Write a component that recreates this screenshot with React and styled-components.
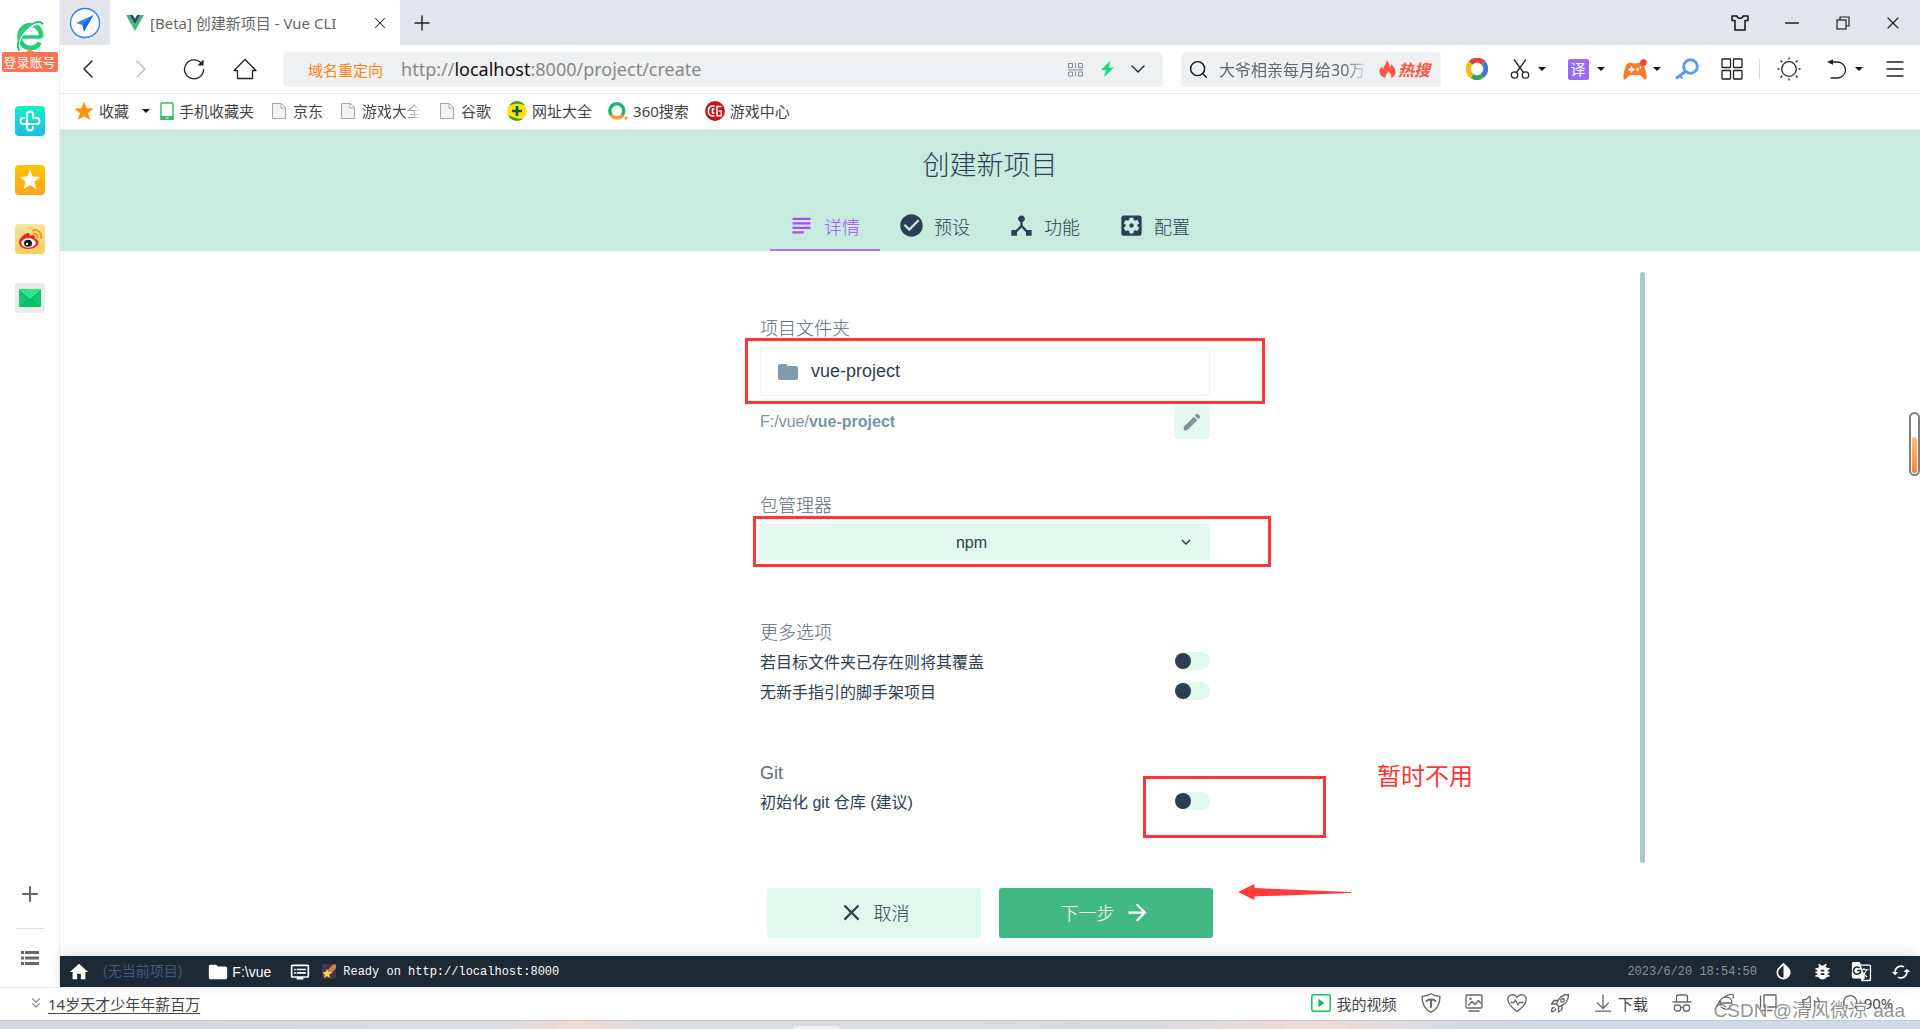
import { useState } from 'react';
import styled, { createGlobalStyle, css } from 'styled-components';
import { ChevronDown, ChevronLeft, ChevronRight, ChevronsDown, Menu, Minus, Plus, Search, Volume2, X } from 'lucide-react';
import {
  MdArrowForward,
  MdBugReport,
  MdCached,
  MdCheckCircle,
  MdClose,
  MdDeviceHub,
  MdDvr,
  MdEdit,
  MdFolder,
  MdGTranslate,
  MdHome,
  MdInvertColors,
  MdKeyboardArrowDown,
  MdSettingsApplications,
  MdSubject,
} from 'react-icons/md';

const uiFont = '"Noto Sans", "Noto Sans CJK SC", sans-serif';
const pageFont = '"Liberation Sans", "Noto Sans CJK SC", sans-serif';
const monoFont = '"Liberation Mono", monospace';

const GlobalStyle = createGlobalStyle`
  *, *::before, *::after {
    box-sizing: border-box;
  }

  body {
    margin: 0;
    background: #fff;
    font-family: ${uiFont};
    font-size: 15px;
    color: #444;
  }

  button {
    border: 0;
    padding: 0;
    background: none;
    color: inherit;
    font: inherit;
    cursor: pointer;
  }

  a {
    color: inherit;
    text-decoration: none;
  }

  svg {
    display: block;
    flex: none;
  }
`;

/* ---------- icons ---------- */

const LogoIcon = () => (
  <svg width="30" height="32" viewBox="0 0 30 32" fill="none">
    <path d="M6 17h20.500" stroke="#1fd072" strokeWidth="3.4" />
    <path d="M26.300 17.500C26.500 9 21.500 5 15.500 5 9 5 4.500 10 4.500 16.500S9 28 15.500 28c4.500 0 7.500-2 9-5.500" stroke="#1fd072" strokeWidth="4.600" />
    <path d="M4 31C1.500 25 4 15 12.500 8.500S26.500 1 28 4" stroke="#fff" strokeWidth="3" />
    <path d="M4.500 31C1 26 3 16 11.500 8.500S25.500 0 28 4.500" stroke="#12c467" strokeWidth="1.700" />
  </svg>
);

const CloverIcon = () => (
  <svg width="30" height="30" viewBox="0 0 30 30">
    <defs>
      <linearGradient id="clover" x2="0" y2="1">
        <stop stopColor="#14f0c4" />
        <stop offset="1" stopColor="#1bbce8" />
      </linearGradient>
    </defs>
    <rect width="30" height="30" rx="4" fill="url(#clover)" />
    <path
      d="M18 12V8.500a3 3 0 0 0-6 0v13a3 3 0 0 0 6 0V21M18 12h3.500a3 3 0 0 1 0 6h-13a3 3 0 0 1 0-6h.5"
      fill="none"
      stroke="#fff"
      strokeWidth="1.900"
      strokeLinecap="round"
    />
  </svg>
);

const StarTileIcon = () => (
  <svg width="30" height="30" viewBox="0 0 30 30">
    <defs>
      <linearGradient id="starTile" x2="0" y2="1">
        <stop stopColor="#ffc400" />
        <stop offset="1" stopColor="#ffa51e" />
      </linearGradient>
    </defs>
    <rect width="30" height="30" rx="4" fill="url(#starTile)" />
    <path d="M15 4.500l2.700 7.100 7.600.4-5.900 4.800 2 7.400-6.400-4.200-6.400 4.200 2-7.400L4.700 12l7.600-.4z" fill="#fff" />
  </svg>
);

const WeiboIcon = () => (
  <svg width="30" height="30" viewBox="0 0 30 30">
    <defs>
      <linearGradient id="weibo" x2="0" y2="1">
        <stop stopColor="#fbe3a0" />
        <stop offset="1" stopColor="#fdcb62" />
      </linearGradient>
    </defs>
    <rect width="30" height="30" rx="4" fill="url(#weibo)" />
    <path d="M4 18.500c0-4 5.500-9 9-9.500 2 0 2 2 1.500 3 2-.9 5-1.200 5.500.5.300.8 0 1.500-.3 2C22 15 23.500 16.500 23.500 18.500 23.500 22 19 25 13.500 25S4 22.500 4 18.500z" fill="#e32a1d" />
    <ellipse cx="13.500" cy="19" rx="7.300" ry="4.700" fill="#fff" />
    <ellipse cx="13" cy="19.300" rx="4" ry="3.500" fill="#161616" />
    <circle cx="12" cy="20" r="1.300" fill="#fff" />
    <path d="M18 6.500c4-1.500 9 1.500 8 7.500M18.500 10c2.500-.6 4.500.8 4 3.700" fill="none" stroke="#f19a1f" strokeWidth="2" strokeLinecap="round" />
  </svg>
);

const MailIcon = () => (
  <svg width="30" height="30" viewBox="0 0 30 30">
    <rect width="30" height="30" rx="4" fill="#ebebeb" />
    <rect x="4" y="6" width="22" height="18" rx="1" fill="#14c870" />
    <path d="M4 24l9-8h4l9 8z" fill="#0fbd66" />
    <path d="M4 7a1 1 0 0 1 1-1h20a1 1 0 0 1 1 1l-11 10z" fill="#2fe48a" />
    <path d="M4.500 8L15 17 25.500 8" fill="none" stroke="#089a50" strokeWidth=".9" />
  </svg>
);

const ListIcon = () => (
  <svg width="18" height="14" viewBox="0 0 18 14" fill="#666">
    <path d="M0 0h3v3H0zM4 0h14v3H4zM0 5.500h3v3H0zM4 5.500h14v3H4zM0 11h3v3H0zM4 11h14v3H4z" />
  </svg>
);

const PlaneIcon = () => (
  <svg width="32" height="32" viewBox="0 0 32 32">
    <circle cx="16" cy="16" r="14.500" fill="#fff" stroke="#2b7ff0" strokeWidth="1.300" />
    <path d="M24.500 8L7 16l6.500 2L15 24.500l2.500-5z" fill="#2f86f6" />
    <path d="M24.500 8l-11 10 1.500 6.500z" fill="#1668e0" />
  </svg>
);

const VueIcon = () => (
  <svg width="18" height="16" viewBox="0 0 18 16">
    <path d="M0 0h3.600L9 9.300 14.400 0H18L9 16z" fill="#41b883" />
    <path d="M3.600 0h3.300L9 3.700 11.100 0h3.300L9 9.300z" fill="#35495e" />
  </svg>
);

const ShirtIcon = () => (
  <svg width="18" height="16" viewBox="0 0 18 16" fill="none" stroke="#111" strokeWidth="1.500" strokeLinejoin="round">
    <path d="M1 1h5c.3 3 5.700 3 6 0h5v4.500h-3V15H4V5.500H1z" />
  </svg>
);

const RestoreIcon = () => (
  <svg width="14" height="14" viewBox="0 0 14 14" fill="none" stroke="#222" strokeWidth="1.200">
    <rect x="1" y="4" width="9" height="9" />
    <path d="M4 4V1h9v9h-3" />
  </svg>
);

const ReloadIcon = () => (
  <svg width="22" height="22" viewBox="0 0 22 22" fill="none">
    <path d="M18.500 5.500a9.500 9.500 0 1 0 2 5.500" stroke="#222" strokeWidth="1.300" />
    <path d="M20.500 1.500v6h-6z" fill="#222" />
  </svg>
);

const HouseIcon = () => (
  <svg width="24" height="22" viewBox="0 0 24 22" fill="none" stroke="#222" strokeWidth="1.300" strokeLinejoin="round">
    <path d="M1 12.500h3.500V20.500h15v-8H23L12 1.500z" />
  </svg>
);

const QrIcon = () => (
  <svg width="15" height="15" viewBox="0 0 15 15" fill="none" stroke="#888">
    <path d="M.5 1.500h4v4h-4zM10.500 1.500h4v4h-4zM.5 10h4v4h-4zM10.500 10h4v4h-4zM7.500 1v5M7.500 9.500v5M0 7.800h15" />
  </svg>
);

const BoltIcon = () => (
  <svg width="13" height="16" viewBox="0 0 13 16">
    <path d="M9 0L0 9h5l-2 7 10-9.500H8z" fill="#16db70" />
  </svg>
);

const FireIcon = () => (
  <svg width="17" height="18" viewBox="0 0 17 18">
    <path d="M7.500 0c2.500 2.500 3.500 5 2.800 7.500 1.200-.4 1.700-1.800 1.600-3.500C15 6.500 16.500 9 16.500 12c0 3-2 5.200-4.500 6 1-2.700-.2-5-3.300-6.700.2 2.500-2.900 3.700-2.200 6.700C3 17.200.500 14.800.500 11.500.500 9.200 1.800 7.500 3 6.500c.1 1.300.5 2 1.300 2.500C4.500 5.500 7.800 4 7.500 0z" fill="#ff5545" />
  </svg>
);

const ColorRingIcon = () => (
  <svg width="22" height="22" viewBox="0 0 22 22" fill="none" strokeWidth="5">
    <path d="M4.600 5A8.500 8.500 0 0 1 17.400 5" stroke="#df4034" />
    <path d="M17.400 5a8.500 8.500 0 0 1-1.500 13" stroke="#4679c5" />
    <path d="M15.900 18a8.500 8.500 0 0 1-9.800 0" stroke="#38a556" />
    <path d="M6.100 18A8.500 8.500 0 0 1 4.600 5" stroke="#f5bb1b" />
  </svg>
);

const ScissorsIcon = () => (
  <svg width="20" height="20" viewBox="0 0 20 20" fill="none" stroke="#222" strokeWidth="1.300">
    <circle cx="4.500" cy="16" r="3.200" />
    <circle cx="15.500" cy="16" r="3.200" />
    <path d="M4 .5l9.500 13M16 .5l-9.500 13" />
  </svg>
);

const GamepadIcon = () => (
  <svg width="24" height="21" viewBox="0 0 24 21">
    <path d="M4 5c3-2.500 6-.5 8-.5s5-2 8 .5c2.500 4.500 4 10.500 3.500 15.500-3 .5-4-3-6.500-4.500H7C4.500 17.500 3.500 21 .500 20.500 0 15.500 1.500 9.500 4 5z" fill="#ff7a2b" />
    <path d="M5.500 10.500h6M8.500 7.500v6" stroke="#fff" strokeWidth="1.800" />
    <circle cx="14.500" cy="10.500" r="1.400" fill="#fff" />
    <circle cx="17.500" cy="8.500" r="1" fill="#fff" />
    <circle cx="20.500" cy="3.500" r="3.300" fill="#ff3b3b" />
  </svg>
);

const KeyIcon = () => (
  <svg width="24" height="22" viewBox="0 0 24 22" fill="none" stroke="#5a9cf8">
    <circle cx="15.500" cy="8.500" r="6.800" strokeWidth="3" />
    <path d="M10.500 13.500L1 20.500" strokeWidth="3" />
    <path d="M4.500 17.500l3 3" strokeWidth="2" />
  </svg>
);

const GridIcon = () => (
  <svg width="22" height="22" viewBox="0 0 22 22" fill="none" stroke="#222" strokeWidth="1.300">
    <rect x="1" y="1" width="8.500" height="8.500" rx=".5" />
    <rect x="12.500" y="1" width="8.500" height="8.500" rx=".5" />
    <rect x="1" y="12.500" width="8.500" height="8.500" rx=".5" />
    <rect x="12.500" y="12.500" width="8.500" height="8.500" rx=".5" />
  </svg>
);

const SunIcon = () => (
  <svg width="24" height="24" viewBox="0 0 24 24" fill="none" stroke="#222" strokeWidth="1.300">
    <circle cx="12" cy="12" r="7.300" />
    <path d="M12 .5v2M12 21.500v2M.5 12h2M21.500 12h2M3.500 3.500l1.800 1.800M18.700 18.700l1.800 1.800M3.500 20.500l1.800-1.800M18.700 5.300l1.800-1.800" />
  </svg>
);

const UndoIcon = () => (
  <svg width="20" height="20" viewBox="0 0 20 20" fill="none">
    <path d="M4 3h6.500a8 8 0 0 1 0 16H3.500" stroke="#222" strokeWidth="1.300" />
    <path d="M0 3L6 .2v5.600z" fill="#222" />
  </svg>
);

const BookmarkStarIcon = () => (
  <svg width="20" height="20" viewBox="0 0 20 20">
    <path d="M10 .5l2.600 6.700 7 .4-5.500 4.400 2 7L10 15.200 3.900 19l2-7L.4 7.600l7-.4z" fill="#ff9407" />
  </svg>
);

const PhoneIcon = () => (
  <svg width="14" height="18" viewBox="0 0 14 18">
    <rect x="1" y="1" width="12" height="16" rx=".8" fill="#fff" stroke="#2fbd65" strokeWidth="1.400" />
    <path d="M.3 14h13.400v4H.3z" fill="#2fbd65" />
    <path d="M5.500 16h3" stroke="#fff" />
  </svg>
);

const DocIcon = () => (
  <svg width="18" height="18" viewBox="0 0 18 18" fill="#f3f3f3" stroke="#a6a6a6">
    <path d="M2.500 1.500h9l4 4v11h-13z" />
    <path d="M11 1.500v4.500h4.500" fill="#fff" />
  </svg>
);

const SiteNavIcon = () => (
  <svg width="20" height="20" viewBox="0 0 20 20">
    <circle cx="10" cy="10" r="9.800" fill="#ffe21a" />
    <path d="M2 4.500C6-1.500 15-1 18 4.500 13 2 7 2.500 2 4.500zM1 13.500c3 2.500 9 4.500 15 4.200C11 21.500 3 20 1 13.500z" fill="#3f9a1c" />
    <path d="M10 5v10M5 10h10" stroke="#0d5f1e" strokeWidth="2.600" />
  </svg>
);

const SearchRingIcon = () => (
  <svg width="20" height="20" viewBox="0 0 20 20" fill="none" strokeWidth="3.400">
    <path d="M3.600 14.500A7 7 0 1 1 14 14.500" stroke="#1db870" />
    <path d="M3 13.500c2.500 4.500 9 4.800 11.700.5" stroke="#ff9a3c" />
    <circle cx="18" cy="17" r="1.700" fill="#ff9a3c" strokeWidth="0" />
  </svg>
);

const GameCenterIcon = () => (
  <svg width="20" height="20" viewBox="0 0 20 20" fill="none">
    <circle cx="10" cy="10" r="9.900" fill="#c01722" />
    <path d="M9.500 5H7.500a4 4 0 0 0-4 4v2a4 4 0 0 0 4 4h2M9.500 8h-2v4h2M16.500 5.500H12v9.300h4.300V10h-2.500" stroke="#fff" strokeWidth="1.500" />
  </svg>
);

const ShootingStarIcon = () => (
  <svg width="14" height="15" viewBox="0 0 14 15">
    <rect width="14" height="15" rx="2" fill="#503052" />
    <path d="M5 7l6-6.500h3V4L9 10z" fill="#c28a35" />
    <path d="M5 5l1.500 3H10l-2.500 2.500.5 3.500-3-1.700L2 14l.7-3.300L.500 8.500l3-.4z" fill="#ffd43d" />
  </svg>
);

const PlayBoxIcon = () => (
  <svg width="20" height="18" viewBox="0 0 20 18">
    <rect x=".8" y=".8" width="18.400" height="16.400" rx="1.500" fill="#f4fff8" stroke="#1fbd64" strokeWidth="1.500" />
    <path d="M7.500 5l6 4-6 4z" fill="#12b458" />
  </svg>
);

const lineProps = { fill: 'none', stroke: '#666', strokeWidth: 1.3, strokeLinejoin: 'round', strokeLinecap: 'round' };

const ShieldIcon = () => (
  <svg width="20" height="20" viewBox="0 0 20 20" {...lineProps}>
    <path d="M10 .8c3 2 6 2.500 9 2.500C19 11 16 16.500 10 19.300 4 16.500 1 11 1 3.300 4 3.300 7 2.800 10 .8z" />
    <path d="M5.500 8C7 6 13 6 14.500 8M10 7v7" strokeWidth="2" />
  </svg>
);

const PictureIcon = () => (
  <svg width="18" height="18" viewBox="0 0 18 18" {...lineProps}>
    <rect x="1" y="1" width="16" height="13" rx="1" />
    <path d="M3.500 11.500l3.500-4 3 3 3.500-4 2 2.500M4 17h10" />
    <circle cx="5.500" cy="4.800" r=".6" />
  </svg>
);

const HeartIcon = () => (
  <svg width="20" height="20" viewBox="0 0 20 20" {...lineProps}>
    <path d="M10 18.500C4 14 .800 10.500.800 6.500c0-5 6.500-6.500 9.200-2.200 2.700-4.300 9.200-2.800 9.200 2.200 0 4-3.200 7.500-9.200 12z" />
    <path d="M4 9.500h3l1.500-2.500 2.500 5 1.500-2.500H16" />
  </svg>
);

const RocketIcon = () => (
  <svg width="20" height="20" viewBox="0 0 20 20" {...lineProps}>
    <path d="M6.500 11C8 6 12 1.500 18.500 1.500c.2 6.500-4.500 10.700-9.500 12.300zM8 7.500H4L1.500 11h4.500M12 12v4.500L8.500 19v-4.500M13 5.500l1.500 1.500M1.500 18.500c0-3 1-4 2.500-4M5.500 16c0 1.500-1 2.500-4 2.500" />
    <circle cx="12.500" cy="7.500" r="1.800" />
  </svg>
);

const DownloadIcon = () => (
  <svg width="20" height="18" viewBox="0 0 20 18" {...lineProps}>
    <path d="M10 1v13M4.500 9l5.500 5.500L15.500 9M2.500 17.200h15" />
  </svg>
);

const IncognitoIcon = () => (
  <svg width="20" height="18" viewBox="0 0 20 18" {...lineProps}>
    <path d="M4.500 8V3a2 2 0 0 1 2-2h7a2 2 0 0 1 2 2v5M1 8h18M8.500 13.500h3" />
    <rect x="2.500" y="11" width="6" height="6" rx="2" />
    <rect x="11.500" y="11" width="6" height="6" rx="2" />
  </svg>
);

const BrowserIcon = () => (
  <svg width="20" height="20" viewBox="0 0 20 20" {...lineProps}>
    <path d="M5 10h12c0-8-12-8-12 0 0 7 9 8 11.500 3M2 18C0 14 5 5 12 2.500s7 0 6 2.500" />
  </svg>
);

const CopyIcon = () => (
  <svg width="20" height="18" viewBox="0 0 20 18" {...lineProps}>
    <path d="M6 1h12v12H6zM2.500 2v14.500H14" />
  </svg>
);

const ArrowShape = () => (
  <svg width="113" height="16" viewBox="0 0 113 16">
    <path d="M0 8L16.500 0v4L113 8v1L16.500 12.500V16z" fill="#ff3b3b" />
  </svg>
);

/* ---------- shell ---------- */

const Shell = styled.div`
  min-height: 100vh;
  display: flex;
  flex-direction: column;
`;

const Workspace = styled.div`
  flex: 1;
  display: flex;
`;

const Main = styled.main`
  flex: 1;
  min-width: 0;
  display: flex;
  flex-direction: column;
`;

const Sidebar = styled.aside`
  width: 60px;
  flex: none;
  display: flex;
  flex-direction: column;
  align-items: center;
  justify-content: space-between;
  padding: 20px 0 22px;
  border-right: 1px solid #eee;
`;

const SidebarTop = styled.div`
  display: flex;
  flex-direction: column;
  align-items: center;
`;

const LoginBadge = styled.button`
  position: relative;
  height: 20px;
  width: 56px;
  margin-bottom: 34px;
  border-radius: 2px;
  background: #ff7352;
  color: #fff;
  font-size: 13px;
  line-height: 20px;
  white-space: nowrap;

  &::before {
    content: '';
    position: absolute;
    left: 24px;
    top: -3px;
    border: 4px solid transparent;
    border-top: 0;
    border-bottom: 3px solid #ff8a5a;
  }
`;

const SidebarApps = styled.nav`
  display: flex;
  flex-direction: column;
  gap: 29px;
`;

const SidebarTools = styled.div`
  display: flex;
  flex-direction: column;
  align-items: center;
  gap: 22px;
  color: #666;
`;

const SidebarRule = styled.hr`
  width: 28px;
  margin: 0;
  border: 0;
  border-top: 1px solid #ddd;
`;

const TitleBar = styled.header`
  height: 45px;
  display: flex;
  align-items: center;
  background: #e2e5ea;
  color: #222;
`;

const HomeBadge = styled.button`
  width: 50px;
  display: flex;
  justify-content: center;
`;

const BrowserTab = styled.div`
  width: 290px;
  height: 45px;
  display: flex;
  align-items: center;
  padding: 0 10px 0 16px;
  border-radius: 2px 2px 0 0;
  background: #fff;
`;

const BrowserTabTitle = styled.span`
  flex: 1;
  padding-left: 6px;
  color: #666;
  font-size: 15px;
  white-space: nowrap;
`;

const Slot = styled.button`
  width: ${(props) => props.$w || 50}px;
  height: 32px;
  flex: none;
  display: flex;
  align-items: center;
  justify-content: center;
  gap: ${(props) => props.$gap || 8}px;
  color: ${(props) => props.$color || '#222'};
  white-space: nowrap;
`;

const WindowControls = styled.div`
  display: flex;
  margin-left: auto;
  padding-right: 2px;
`;

const Toolbar = styled.div`
  height: 49px;
  display: flex;
  align-items: center;
  padding-left: 2px;
  border-bottom: 1px solid #e9e9eb;
`;

const boxField = css`
  height: 35px;
  display: flex;
  align-items: center;
  border: 1px solid #f3f4f5;
  border-radius: 4px;
  background: #eff0f2;
`;

const AddressBox = styled.div`
  ${boxField}
  flex: 1;
  min-width: 0;
  margin: 0 18px 0 13px;
  padding: 0 9px 0 24px;
`;

const RedirectTag = styled.span`
  margin-right: 18px;
  color: #ff8412;
  font-size: 15px;
  white-space: nowrap;
`;

const Url = styled.span`
  flex: 1;
  color: #888;
  font-size: 18px;
  white-space: nowrap;

  b {
    color: #111;
    font-weight: 400;
  }
`;

const SearchBox = styled.div`
  ${boxField}
  width: 260px;
  flex: none;
  padding: 0 10px 0 6px;
`;

const SearchText = styled.span`
  flex: 1;
  min-width: 0;
  margin: 0 11px 0 10px;
  overflow: hidden;
  color: #666;
  font-size: 16px;
  white-space: nowrap;
  mask-image: linear-gradient(90deg, #000 85%, transparent);
`;

const HotSearch = styled.span`
  display: flex;
  align-items: center;
  gap: 2px;
  color: #ff5545;
  font-size: 16px;
  font-weight: 700;
  font-style: italic;
`;

const ToolCluster = styled.div`
  display: flex;
  align-items: center;
  padding: 0 2px 0 14px;
`;

const Caret = styled.span`
  width: 0;
  border: 4px solid transparent;
  border-top: 4px solid #111;
  border-bottom: 0;
`;

const TranslateTile = styled.span`
  width: 21px;
  height: 21px;
  border-radius: 2px;
  background: #9a6bfb;
  color: #fff;
  font-size: 15px;
  line-height: 20px;
  text-align: center;
`;

const Divider = styled.span`
  width: 1px;
  height: 20px;
  background: #d8d8d8;
`;

const BookmarkBar = styled.nav`
  height: 36px;
  display: flex;
  align-items: center;
  padding: 0 0 2px 14px;
  border-bottom: 1px solid #e9e9eb;
`;

const Bookmark = styled.a`
  display: flex;
  align-items: center;
  gap: 5px;
  margin-right: ${(props) => (props.$menu ? 10 : 16)}px;
  font-size: 15px;
  white-space: nowrap;

  span {
    mask-image: ${(props) => (props.$faded ? 'linear-gradient(90deg, #000 65%, transparent)' : 'none')};
  }

  ${Caret} {
    margin-left: 8px;
  }
`;

/* ---------- wizard page ---------- */

const Page = styled.section`
  flex: 1;
  display: flex;
  flex-direction: column;
  position: relative;
  color: #2c3e50;
  font-family: ${pageFont};
`;

const PageHeader = styled.header`
  display: flex;
  flex-direction: column;
  align-items: center;
  background: #c7ebdf;
`;

const PageTitle = styled.h1`
  margin: 0;
  font-size: 27px;
  font-weight: 300;
  line-height: 73px;
`;

const Tabs = styled.div`
  display: flex;
`;

const Tab = styled.button`
  width: 110px;
  height: 48px;
  display: flex;
  align-items: center;
  justify-content: center;
  gap: 9px;
  padding: 0 2px 1px 0;
  border-bottom: 2px solid ${(props) => (props.$active ? '#ab75ef' : 'transparent')};
  color: ${(props) => (props.$active ? '#a84cf5' : '#2c3e50')};
  font-size: 18px;
  font-weight: 300;
`;

const Stage = styled.div`
  flex: 1;
  width: 100%;
  max-width: 1310px;
  display: flex;
  align-self: center;
  gap: 5px;
  margin-top: 21px;
`;

const StageBody = styled.div`
  flex: 1;
  display: flex;
  justify-content: center;
`;

const ScrollThumb = styled.div`
  width: 5px;
  border-radius: 3px;
  background: #b3c6cf;
`;

const Form = styled.form`
  position: relative;
  width: 450px;
  display: flex;
  flex-direction: column;
  gap: 55px;
  padding-top: 45px;
`;

const Field = styled.div`
  display: flex;
  flex-direction: column;
`;

const FieldTitle = styled.label`
  color: #5c6978;
  font-size: 18px;
  font-weight: 300;
  line-height: 24px;
`;

const TextBox = styled.div`
  height: 49px;
  display: flex;
  align-items: center;
  gap: 11px;
  margin: 6px 0;
  padding: 0 15px;
  border: 1px solid #e0f8ed;
  border-radius: 3px;
  color: #7e9cab;

  input {
    flex: 1;
    border: 0;
    outline: 0;
    padding: 0;
    background: none;
    color: #2c3e50;
    font: 18px ${pageFont};
  }
`;

const PathRow = styled.div`
  display: flex;
  align-items: center;
  justify-content: space-between;
  padding-top: 2px;
  color: #7b94a0;
  font-size: 16px;
`;

const EditButton = styled.button`
  width: 36px;
  height: 35px;
  display: flex;
  align-items: center;
  justify-content: center;
  border-radius: 3px;
  background: #e6f9f0;
  color: #7b94a0;
`;

const SelectBox = styled.div`
  position: relative;
  margin: 6px 0;

  select {
    width: 100%;
    height: 36px;
    appearance: none;
    border: 0;
    border-radius: 3px;
    padding: 0 27px 0 0;
    background: #e0f8ed;
    color: #2c3e50;
    font: 16px ${pageFont};
    text-align-last: center;
  }

  svg {
    position: absolute;
    top: 9px;
    right: 15px;
    pointer-events: none;
  }
`;

const SwitchList = styled.div`
  padding-top: 1px;
`;

const SwitchRow = styled.label`
  height: 30px;
  display: flex;
  align-items: center;
  justify-content: space-between;
  font-size: 16px;

  input {
    appearance: none;
    width: 35px;
    height: 18px;
    display: flex;
    align-items: center;
    justify-content: ${(props) => (props.$on ? 'flex-end' : 'flex-start')};
    margin: 0;
    border-radius: 9px;
    background: #e0f8ed;
  }

  input::before {
    content: '';
    width: 16px;
    height: 16px;
    border-radius: 50%;
    background: ${(props) => (props.$on ? '#42b983' : '#2c3e50')};
  }
`;

const Highlight = styled.div`
  position: absolute;
  left: ${(props) => props.$x}px;
  top: ${(props) => props.$y}px;
  width: ${(props) => props.$w}px;
  height: ${(props) => props.$h}px;
  border: 3px solid #ff3636;
  pointer-events: none;
`;

const Remark = styled.div`
  position: absolute;
  left: 617px;
  top: 487px;
  color: #ff3636;
  font-size: 24px;
  line-height: 36px;
  white-space: nowrap;
`;

const Actions = styled.div`
  position: relative;
  align-self: center;
  display: flex;
  gap: 18px;
  padding: 25px 0 18px;
`;

const ActionButton = styled.button`
  width: 214px;
  height: 50px;
  display: flex;
  align-items: center;
  justify-content: center;
  gap: 9px;
  padding: 0 1px 2px 0;
  border-radius: 3px;
  background: ${(props) => (props.$primary ? '#42b983' : '#e0f8ed')};
  color: ${(props) => (props.$primary ? '#fff' : '#2c3e50')};
  font-size: 18px;
  font-weight: 300;
`;

const Pointer = styled.div`
  position: absolute;
  left: 471px;
  top: 21px;
`;

const SideGauge = styled.div`
  position: absolute;
  right: 0;
  top: 282px;
  width: 11px;
  height: 64px;
  display: flex;
  align-items: flex-end;
  padding: 1px;
  border: 2px solid #808080;
  border-radius: 6px;
  background: #fff;

  span {
    flex: 1;
    height: 36px;
    border-radius: 3px;
    background: linear-gradient(#ffc078, #ff8432);
  }
`;

const StatusBar = styled.footer`
  height: 31px;
  display: flex;
  align-items: center;
  padding-left: 8px;
  background: #1d2935;
  box-shadow: 0 -2px 12px rgba(0, 0, 0, 0.14);
  color: #fff;
  font-size: 14px;
  white-space: nowrap;
`;

const StatusItem = styled.div`
  display: flex;
  align-items: center;
  gap: ${(props) => props.$gap || 12}px;
  margin-right: ${(props) => props.$after || 0}px;
`;

const ProjectName = styled.span`
  padding-bottom: 3px;
  color: #3f5b7b;
`;

const LogLine = styled.span`
  font-family: ${monoFont};
  font-size: 12px;
`;

const Clock = styled.time`
  margin: 0 7px 0 auto;
  color: #8d949a;
  font-family: ${monoFont};
  font-size: 12px;
`;

const StatusButton = styled(Slot)`
  width: 39px;
  color: #fff;
`;

/* ---------- bottom bar ---------- */

const BottomBar = styled.footer`
  position: relative;
  height: 33px;
  display: flex;
  align-items: center;
  justify-content: space-between;
  padding: 0 18px 2px 28px;
  border-top: 1px solid #e6e6e8;
`;

const NewsLink = styled.a`
  display: flex;
  align-items: center;
  gap: 4px;
  color: #888;

  span {
    color: #444;
    text-decoration: underline;
    text-underline-offset: 3px;
  }
`;

const BottomTools = styled.div`
  display: flex;
  align-items: center;
`;

const Watermark = styled.div`
  position: absolute;
  right: 15px;
  top: 9px;
  color: rgba(110, 110, 110, 0.75);
  font-family: ${pageFont};
  font-size: 19px;
  line-height: 28px;
  text-shadow: 1px 1px 0 #fff;
  white-space: nowrap;
  pointer-events: none;
`;

const Taskbar = styled.div`
  height: 9px;
  display: flex;
  align-items: flex-end;
  padding-left: 793px;
  border-top: 1px solid #c6c9cd;
  background: linear-gradient(90deg, #d5d8df 0%, #dadbe0 26%, #efdcd4 30%, #dadbdf 34%, #d9dade 60%, #efdbd7 69%, #d3dae4 76%, #d0d9e4 100%);

  span {
    width: 47px;
    height: 3px;
    border-radius: 3px 3px 0 0;
    background: #eeeef0;
  }
`;

const bookmarks = [
  { label: '收藏', icon: <BookmarkStarIcon />, menu: true },
  { label: '手机收藏夹', icon: <PhoneIcon /> },
  { label: '京东', icon: <DocIcon /> },
  { label: '游戏大全', icon: <DocIcon />, faded: true },
  { label: '谷歌', icon: <DocIcon /> },
  { label: '网址大全', icon: <SiteNavIcon /> },
  { label: '360搜索', icon: <SearchRingIcon /> },
  { label: '游戏中心', icon: <GameCenterIcon /> },
];

const wizardTabs = [
  { id: 'details', label: '详情', Icon: MdSubject },
  { id: 'presets', label: '预设', Icon: MdCheckCircle },
  { id: 'features', label: '功能', Icon: MdDeviceHub },
  { id: 'config', label: '配置', Icon: MdSettingsApplications },
];

const Switch = ({ label }) => {
  const [on, setOn] = useState(false);

  return (
    <SwitchRow $on={on}>
      {label}
      <input type="checkbox" role="switch" checked={on} onChange={(e) => setOn(e.target.checked)} />
    </SwitchRow>
  );
};

const BrowserChrome = () => (
  <>
    <TitleBar>
      <HomeBadge aria-label="主页"><PlaneIcon /></HomeBadge>
      <BrowserTab>
        <VueIcon />
        <BrowserTabTitle>[Beta] 创建新项目 - Vue CLI</BrowserTabTitle>
        <Slot $w={20} aria-label="关闭标签"><X size={18} strokeWidth={1.4} /></Slot>
      </BrowserTab>
      <Slot $w={44} aria-label="新标签"><Plus size={24} strokeWidth={1.4} /></Slot>
      <WindowControls>
        <Slot $w={52} aria-label="皮肤"><ShirtIcon /></Slot>
        <Slot $w={52} aria-label="最小化"><Minus size={22} strokeWidth={1.4} /></Slot>
        <Slot $w={50} aria-label="还原"><RestoreIcon /></Slot>
        <Slot $w={50} aria-label="关闭"><X size={20} strokeWidth={1.4} /></Slot>
      </WindowControls>
    </TitleBar>

    <Toolbar>
      <Slot $w={52} aria-label="后退"><ChevronLeft size={32} strokeWidth={1.1} /></Slot>
      <Slot $w={54} $color="#bbb" aria-label="前进"><ChevronRight size={32} strokeWidth={1.1} /></Slot>
      <Slot $w={52} aria-label="刷新"><ReloadIcon /></Slot>
      <Slot $w={50} aria-label="首页"><HouseIcon /></Slot>
      <AddressBox>
        <RedirectTag>域名重定向</RedirectTag>
        <Url>http://<b>localhost</b>:8000/project/create</Url>
        <Slot $w={32} aria-label="二维码"><QrIcon /></Slot>
        <Slot $w={32} aria-label="极速模式"><BoltIcon /></Slot>
        <Slot $w={30} aria-label="展开"><ChevronDown size={24} strokeWidth={1.4} /></Slot>
      </AddressBox>
      <SearchBox>
        <Search size={21} strokeWidth={1.6} color="#111" />
        <SearchText>大爷相亲每月给30万</SearchText>
        <HotSearch><FireIcon />热搜</HotSearch>
      </SearchBox>
      <ToolCluster>
        <Slot $w={44} aria-label="浏览助手"><ColorRingIcon /></Slot>
        <Slot $w={58} aria-label="截图"><ScissorsIcon /><Caret /></Slot>
        <Slot $w={58}><TranslateTile>译</TranslateTile><Caret /></Slot>
        <Slot $w={54} $gap={6} aria-label="游戏"><GamepadIcon /><Caret /></Slot>
        <Slot $w={36} aria-label="密码"><KeyIcon /></Slot>
        <Slot $w={54} aria-label="扩展"><GridIcon /></Slot>
        <Divider />
        <Slot $w={58} aria-label="亮度"><SunIcon /></Slot>
        <Slot $w={54} aria-label="恢复"><UndoIcon /><Caret /></Slot>
        <Slot $w={46} aria-label="菜单"><Menu size={24} strokeWidth={1.4} /></Slot>
      </ToolCluster>
    </Toolbar>

    <BookmarkBar>
      {bookmarks.map((item) => (
        <Bookmark key={item.label} href="#" $menu={item.menu} $faded={item.faded}>
          {item.icon}
          <span>{item.label}</span>
          {item.menu && <Caret />}
        </Bookmark>
      ))}
    </BookmarkBar>
  </>
);

const CreateProject = () => {
  const [active, setActive] = useState('details');
  const [folder, setFolder] = useState('vue-project');

  return (
    <Page>
      <PageHeader>
        <PageTitle>创建新项目</PageTitle>
        <Tabs role="tablist">
          {wizardTabs.map(({ id, label, Icon }) => (
            <Tab key={id} role="tab" aria-selected={active === id} $active={active === id} onClick={() => setActive(id)}>
              <Icon size={27} />
              {label}
            </Tab>
          ))}
        </Tabs>
      </PageHeader>

      <Stage>
        <StageBody>
          <Form onSubmit={(e) => e.preventDefault()}>
            <Field>
              <FieldTitle htmlFor="folder">项目文件夹</FieldTitle>
              <TextBox>
                <MdFolder size={24} />
                <input id="folder" type="text" value={folder} onChange={(e) => setFolder(e.target.value)} />
              </TextBox>
              <PathRow>
                <span>F:/vue/<b>{folder}</b></span>
                <EditButton type="button" aria-label="编辑路径"><MdEdit size={22} /></EditButton>
              </PathRow>
            </Field>

            <Field>
              <FieldTitle htmlFor="manager">包管理器</FieldTitle>
              <SelectBox>
                <select id="manager" defaultValue="npm">
                  <option value="npm">npm</option>
                </select>
                <MdKeyboardArrowDown size={18} />
              </SelectBox>
            </Field>

            <Field>
              <FieldTitle as="div">更多选项</FieldTitle>
              <SwitchList>
                <Switch label="若目标文件夹已存在则将其覆盖" />
                <Switch label="无新手指引的脚手架项目" />
              </SwitchList>
            </Field>

            <Field>
              <FieldTitle as="div">Git</FieldTitle>
              <SwitchList>
                <Switch label="初始化 git 仓库 (建议)" />
              </SwitchList>
            </Field>

            <Highlight $x={-15} $y={66} $w={520} $h={66} />
            <Highlight $x={-7} $y={244} $w={518} $h={51} />
            <Highlight $x={383} $y={504} $w={183} $h={62} />
            <Remark>暂时不用</Remark>
          </Form>
        </StageBody>
        <ScrollThumb />
      </Stage>

      <Actions>
        <ActionButton><MdClose size={27} />取消</ActionButton>
        <ActionButton $primary>下一步<MdArrowForward size={27} /></ActionButton>
        <Pointer><ArrowShape /></Pointer>
      </Actions>

      <StatusBar>
        <StatusItem $gap={13} $after={25}>
          <MdHome size={22} />
          <ProjectName>(无当前项目)</ProjectName>
        </StatusItem>
        <StatusItem $gap={3} $after={19}>
          <MdFolder size={22} />
          F:\vue
        </StatusItem>
        <StatusItem>
          <MdDvr size={20} />
          <StatusItem $gap={7}>
            <ShootingStarIcon />
            <LogLine>Ready on http://localhost:8000</LogLine>
          </StatusItem>
        </StatusItem>
        <Clock>2023/6/20 18:54:50</Clock>
        <StatusButton aria-label="切换主题"><MdInvertColors size={21} /></StatusButton>
        <StatusButton aria-label="报告问题"><MdBugReport size={21} /></StatusButton>
        <StatusButton aria-label="翻译"><MdGTranslate size={21} /></StatusButton>
        <StatusButton aria-label="刷新数据"><MdCached size={20} /></StatusButton>
      </StatusBar>

      <SideGauge><span /></SideGauge>
    </Page>
  );
};

const App = () => (
  <Shell>
    <GlobalStyle />
    <Workspace>
      <Sidebar>
        <SidebarTop>
          <LogoIcon />
          <LoginBadge>登录账号</LoginBadge>
          <SidebarApps>
            <CloverIcon />
            <StarTileIcon />
            <WeiboIcon />
            <MailIcon />
          </SidebarApps>
        </SidebarTop>
        <SidebarTools>
          <Plus size={24} strokeWidth={2} />
          <SidebarRule />
          <ListIcon />
        </SidebarTools>
      </Sidebar>
      <Main>
        <BrowserChrome />
        <CreateProject />
      </Main>
    </Workspace>

    <BottomBar>
      <NewsLink href="#">
        <ChevronsDown size={16} strokeWidth={1.8} />
        <span>14岁天才少年年薪百万</span>
      </NewsLink>
      <BottomTools>
        <Slot $w={110} $gap={5} $color="#444"><PlayBoxIcon />我的视频</Slot>
        <Slot $w={43} aria-label="安全"><ShieldIcon /></Slot>
        <Slot $w={43} aria-label="图片"><PictureIcon /></Slot>
        <Slot $w={43} aria-label="健康"><HeartIcon /></Slot>
        <Slot $w={43} aria-label="加速"><RocketIcon /></Slot>
        <Slot $w={79} $gap={5} $color="#444"><DownloadIcon />下载</Slot>
        <Slot $w={43} aria-label="无痕"><IncognitoIcon /></Slot>
        <Slot $w={43} aria-label="内核"><BrowserIcon /></Slot>
        <Slot $w={43} aria-label="窗口"><CopyIcon /></Slot>
        <Slot $w={43} aria-label="声音"><Volume2 size={20} strokeWidth={1.5} color="#666" /></Slot>
        <Slot $w={70} $gap={3} $color="#444"><Search size={20} strokeWidth={1.5} color="#666" />90%</Slot>
      </BottomTools>
      <Watermark>CSDN @清风微凉 aaa</Watermark>
    </BottomBar>
    <Taskbar><span /></Taskbar>
  </Shell>
);

export default App;
